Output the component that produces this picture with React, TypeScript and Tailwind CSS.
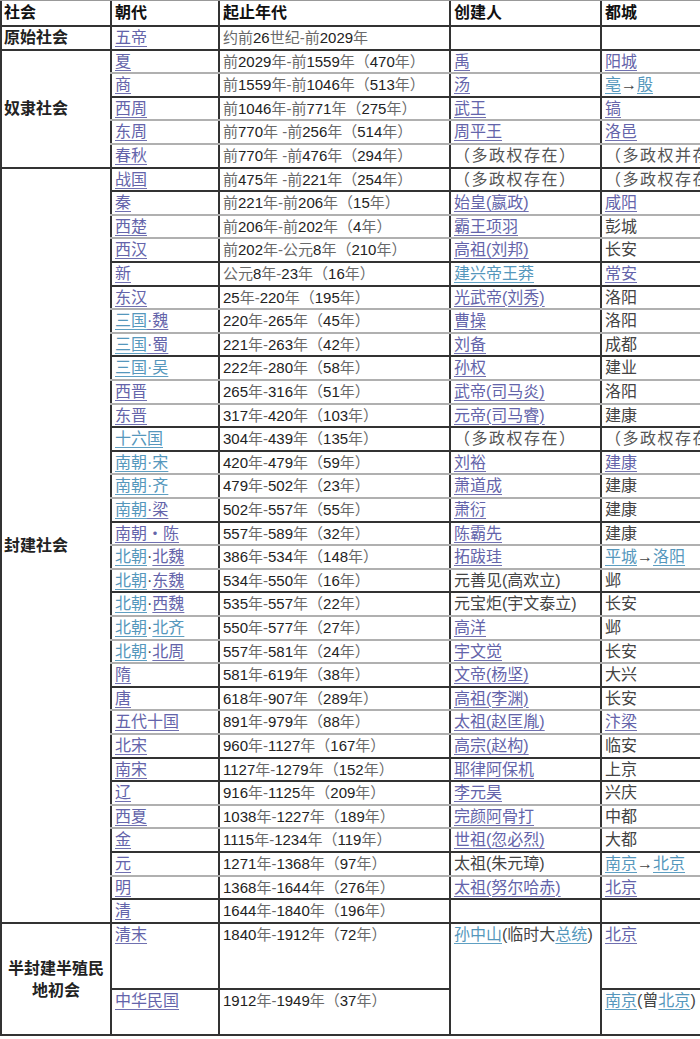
import React from 'react';

type Seg = { t: string; c: 'p' | 't' | 'n' | 'g' };
const p = (t: string): Seg => ({ t, c: 'p' });
const tl = (t: string): Seg => ({ t, c: 't' });
const n = (t: string): Seg => ({ t, c: 'n' });
const g = (t: string): Seg => ({ t, c: 'g' });

type Row = { name: Seg[]; date: string; founder: Seg[]; capital: Seg[]; dark: boolean };

const rows: Row[] = [
  { name: [p('五帝')], date: '约前26世纪-前2029年', founder: [], capital: [], dark: true },
  { name: [p('夏')], date: '前2029年-前1559年（470年）', founder: [p('禹')], capital: [p('阳城')], dark: true },
  { name: [p('商')], date: '前1559年-前1046年（513年）', founder: [p('汤')], capital: [tl('亳'), n('→'), tl('殷')], dark: false },
  { name: [p('西周')], date: '前1046年-前771年（275年）', founder: [p('武王')], capital: [p('镐')], dark: true },
  { name: [p('东周')], date: '前770年 -前256年（514年）', founder: [p('周平王')], capital: [p('洛邑')], dark: false },
  { name: [p('春秋')], date: '前770年 -前476年（294年）', founder: [g('（多政权存在）')], capital: [g('（多政权并存）')], dark: false },
  { name: [p('战国')], date: '前475年 -前221年（254年）', founder: [g('（多政权存在）')], capital: [g('（多政权存在）')], dark: true },
  { name: [p('秦')], date: '前221年-前206年（15年）', founder: [p('始皇(嬴政)')], capital: [p('咸阳')], dark: true },
  { name: [p('西楚')], date: '前206年-前202年（4年）', founder: [p('霸王项羽')], capital: [n('彭城')], dark: false },
  { name: [p('西汉')], date: '前202年-公元8年（210年）', founder: [p('高祖(刘邦)')], capital: [n('长安')], dark: false },
  { name: [p('新')], date: '公元8年-23年（16年）', founder: [tl('建兴帝王莽')], capital: [p('常安')], dark: true },
  { name: [p('东汉')], date: '25 年-220年（195年）', founder: [p('光武帝(刘秀)')], capital: [n('洛阳')], dark: true },
  { name: [tl('三国'), p('·魏')], date: '220年-265年（45年）', founder: [p('曹操')], capital: [n('洛阳')], dark: false },
  { name: [tl('三国'), p('·蜀')], date: '221年-263年（42年）', founder: [p('刘备')], capital: [n('成都')], dark: false },
  { name: [tl('三国·吴')], date: '222年-280年（58年）', founder: [p('孙权')], capital: [n('建业')], dark: true },
  { name: [p('西晋')], date: '265年-316年（51年）', founder: [p('武帝(司马炎)')], capital: [n('洛阳')], dark: false },
  { name: [p('东晋')], date: '317年-420年（103年）', founder: [p('元帝(司马睿)')], capital: [n('建康')], dark: false },
  { name: [tl('十六国')], date: '304年-439年（135年）', founder: [g('（多政权存在）')], capital: [g('（多政权存在）')], dark: true },
  { name: [tl('南朝·宋')], date: '420年-479年（59年）', founder: [p('刘裕')], capital: [p('建康')], dark: true },
  { name: [tl('南朝·齐')], date: '479年-502年（23年）', founder: [p('萧道成')], capital: [n('建康')], dark: false },
  { name: [tl('南朝'), p('·梁')], date: '502年-557年（55年）', founder: [p('萧衍')], capital: [n('建康')], dark: false },
  { name: [p('南朝・陈')], date: '557年-589年（32年）', founder: [p('陈霸先')], capital: [n('建康')], dark: true },
  { name: [tl('北朝'), n('·'), p('北魏')], date: '386年-534年（148年）', founder: [p('拓跋珪')], capital: [tl('平城'), n('→'), tl('洛阳')], dark: false },
  { name: [tl('北朝'), n('·'), p('东魏')], date: '534年-550年（16年）', founder: [n('元善见(高欢立)')], capital: [n('邺')], dark: false },
  { name: [tl('北朝'), n('·'), p('西魏')], date: '535年-557年（22年）', founder: [n('元宝炬(宇文泰立)')], capital: [n('长安')], dark: true },
  { name: [tl('北朝'), n('·'), tl('北齐')], date: '550年-577年（27年）', founder: [p('高洋')], capital: [n('邺')], dark: false },
  { name: [tl('北朝'), n('·'), p('北周')], date: '557年-581年（24年）', founder: [p('宇文觉')], capital: [n('长安')], dark: false },
  { name: [p('隋')], date: '581年-619年（38年）', founder: [p('文帝(杨坚)')], capital: [n('大兴')], dark: false },
  { name: [p('唐')], date: '618年-907年（289年）', founder: [p('高祖(李渊)')], capital: [n('长安')], dark: true },
  { name: [p('五代十国')], date: '891年-979年（88年）', founder: [p('太祖(赵匡胤)')], capital: [p('汴梁')], dark: false },
  { name: [p('北宋')], date: '960年-1127年（167年）', founder: [p('高宗(赵构)')], capital: [n('临安')], dark: false },
  { name: [p('南宋')], date: '1127年-1279年（152年）', founder: [p('耶律阿保机')], capital: [n('上京')], dark: true },
  { name: [p('辽')], date: '916 年-1125年（209年）', founder: [p('李元昊')], capital: [n('兴庆')], dark: true },
  { name: [p('西夏')], date: '1038年-1227年（189年）', founder: [p('完颜阿骨打')], capital: [n('中都')], dark: false },
  { name: [p('金')], date: '1115年-1234年（119年）', founder: [p('世祖(忽必烈)')], capital: [n('大都')], dark: false },
  { name: [p('元')], date: '1271年-1368年（97年）', founder: [n('太祖(朱元璋)')], capital: [tl('南京'), n('→'), tl('北京')], dark: true },
  { name: [p('明')], date: '1368年-1644年（276年）', founder: [p('太祖(努尔哈赤)')], capital: [p('北京')], dark: false },
  { name: [p('清')], date: '1644年-1840年（196年）', founder: [], capital: [], dark: true },
];

const tops = Array.from({ length: 39 }, (_, i) => Math.round(25 + 23.6 * i));

function Segs({ segs }: { segs: Seg[] }) {
  return (
    <>
      {segs.map((s, i) => {
        if (s.c === 'p')
          return (
            <span key={i} className="text-[#6464aa] underline decoration-[#7070b0] underline-offset-[3px] decoration-1">
              {s.t}
            </span>
          );
        if (s.c === 't')
          return (
            <span key={i} className="text-[#5597bc] underline decoration-[#5f9fc2] underline-offset-[3px] decoration-1">
              {s.t}
            </span>
          );
        if (s.c === 'g')
          return (
            <span key={i} className="text-[#555] tracking-[1.5px]">
              {s.t}
            </span>
          );
        return (
          <span key={i} className="text-[#444]">
            {s.t}
          </span>
        );
      })}
    </>
  );
}

function DateText({ text }: { text: string }) {
  const parts = text.split(/([0-9]+)/);
  return (
    <>
      {parts.map((part, i) =>
        /^[0-9]+$/.test(part) ? (
          <span key={i} className="text-[#222]">
            {part}
          </span>
        ) : (
          <span key={i} className="text-[#6a6a6a]">
            {part}
          </span>
        )
      )}
    </>
  );
}

function DataRow({ row, idx }: { row: Row; idx: number }) {
  const h = tops[idx + 1] - tops[idx];
  return (
    <div
      className={`flex ${h === 24 ? 'h-[24px]' : 'h-[23px]'} border-t-2 ${
        row.dark ? 'border-[#333]' : 'border-[#b0b0b0]'
      }`}
    >
      <div className="w-[108px] shrink-0 border-l-2 border-[#333] pl-[3px] flex items-center whitespace-nowrap text-[16px]">
        <Segs segs={row.name} />
      </div>
      <div className="w-[231px] shrink-0 border-l-2 border-[#333] pl-[3px] flex items-center whitespace-nowrap text-[15px]">
        <DateText text={row.date} />
      </div>
      <div className="w-[151px] shrink-0 border-l-2 border-[#333] pl-[3px] flex items-center whitespace-nowrap text-[16px]">
        <Segs segs={row.founder} />
      </div>
      <div className="w-[200px] shrink-0 border-l-2 border-[#333] pl-[3px] flex items-center whitespace-nowrap text-[16px]">
        <Segs segs={row.capital} />
      </div>
    </div>
  );
}

function Group({ label, from, to, centered }: { label: React.ReactNode; from: number; to: number; centered?: boolean }) {
  return (
    <div className="flex">
      <div
        className={`w-[110px] shrink-0 border-l-2 border-t-2 border-[#333] flex items-center font-bold text-[16px] text-[#222] ${
          centered ? 'justify-center text-center' : 'pl-[2px]'
        }`}
      >
        {label}
      </div>
      <div className="flex flex-col">
        {rows.slice(from, to).map((r, i) => (
          <DataRow key={from + i} row={r} idx={from + i} />
        ))}
      </div>
    </div>
  );
}

export default function App() {
  return (
    <div className="w-[700px] h-[1039px] overflow-hidden bg-white font-['Liberation_Sans','Noto_Sans_CJK_SC',sans-serif] leading-[20px]">
      <div className="w-[800px] border-b-2 border-[#333]">
        {/* Header */}
        <div className="flex h-[25px] border-t border-[#999] font-bold text-[16px] text-[#111]">
          <div className="w-[110px] shrink-0 border-l-2 border-[#333] pl-[2px] flex items-center">社会</div>
          <div className="w-[108px] shrink-0 border-l-2 border-[#333] pl-[3px] flex items-center">朝代</div>
          <div className="w-[231px] shrink-0 border-l-2 border-[#333] pl-[3px] flex items-center">起止年代</div>
          <div className="w-[151px] shrink-0 border-l-2 border-[#333] pl-[3px] flex items-center">创建人</div>
          <div className="w-[200px] shrink-0 border-l-2 border-[#333] pl-[3px] flex items-center">都城</div>
        </div>

        <Group label="原始社会" from={0} to={1} />
        <Group label="奴隶社会" from={1} to={6} />
        <Group label="封建社会" from={6} to={38} />

        {/* Last group */}
        <div className="flex">
          <div className="w-[110px] shrink-0 border-l-2 border-t-2 border-[#333] flex items-center justify-center text-center font-bold text-[16px] text-[#222] leading-[22px] pt-[2px]">
            <span>
              半封建半殖民
              <br />
              地初会
            </span>
          </div>
          <div className="flex flex-col">
            <div className="flex h-[66px] border-t-2 border-[#333]">
              <div className="w-[108px] shrink-0 border-l-2 border-[#333] pl-[3px] pt-[1px] whitespace-nowrap text-[16px]">
                <Segs segs={[p('清末')]} />
              </div>
              <div className="w-[231px] shrink-0 border-l-2 border-[#333] pl-[3px] pt-[1px] whitespace-nowrap text-[15px]">
                <DateText text="1840年-1912年（72年）" />
              </div>
            </div>
            <div className="flex h-[46px] border-t-2 border-[#333]">
              <div className="w-[108px] shrink-0 border-l-2 border-[#333] pl-[3px] pt-[1px] whitespace-nowrap text-[16px]">
                <Segs segs={[p('中华民国')]} />
              </div>
              <div className="w-[231px] shrink-0 border-l-2 border-[#333] pl-[3px] pt-[1px] whitespace-nowrap text-[15px]">
                <DateText text="1912年-1949年（37年）" />
              </div>
            </div>
          </div>
          <div className="w-[151px] h-[112px] shrink-0 border-l-2 border-t-2 border-[#333] pl-[3px] pt-[1px] whitespace-nowrap text-[16px]">
            <Segs segs={[tl('孙中山'), n('(临时大'), tl('总统'), n(')')]} />
          </div>
          <div className="flex flex-col">
            <div className="w-[200px] h-[66px] shrink-0 border-l-2 border-t-2 border-[#333] pl-[3px] pt-[1px] whitespace-nowrap text-[16px]">
              <Segs segs={[p('北京')]} />
            </div>
            <div className="w-[200px] h-[46px] shrink-0 border-l-2 border-t-2 border-[#333] pl-[3px] pt-[1px] whitespace-nowrap text-[16px]">
              <Segs segs={[tl('南京'), n('(曾'), tl('北京'), n(')')]} />
            </div>
          </div>
        </div>
      </div>
    </div>
  );
}
